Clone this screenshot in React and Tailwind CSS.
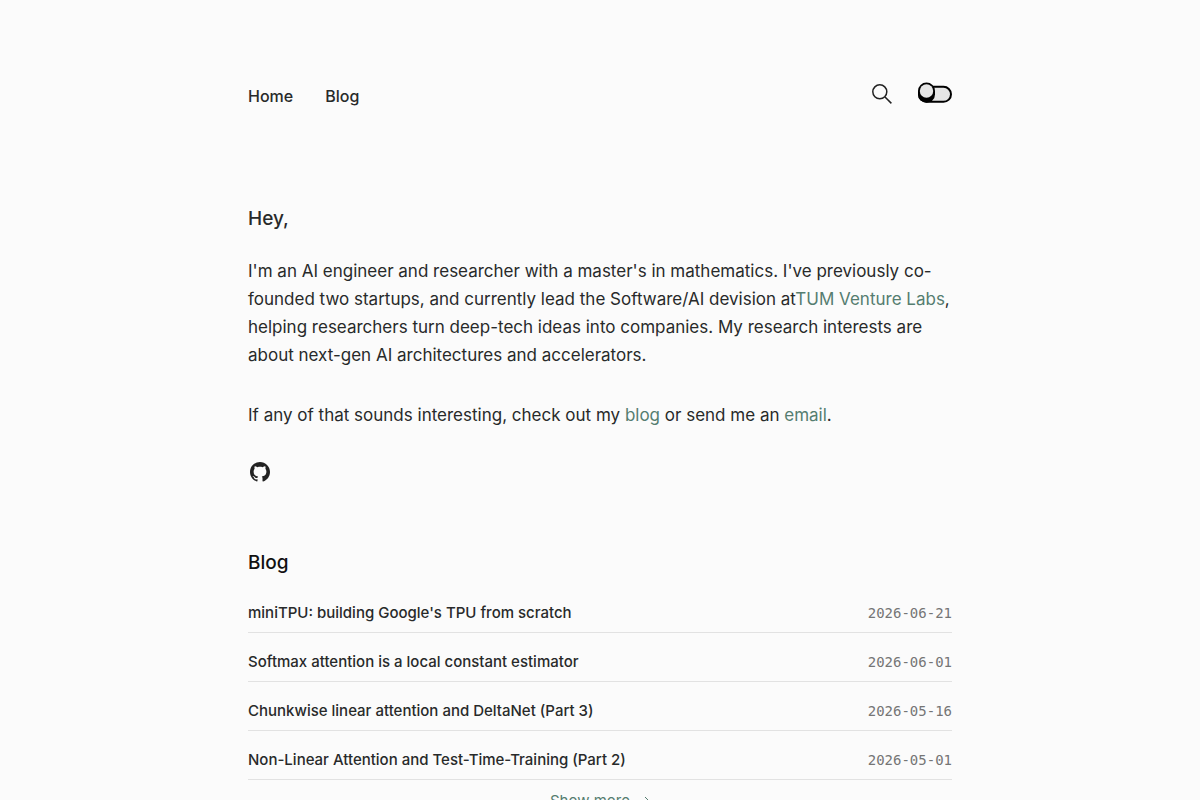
import { useState } from "react";

const POSTS = [
  { title: "miniTPU: building Google's TPU from scratch", date: "2026-06-21" },
  { title: "Softmax attention is a local constant estimator", date: "2026-06-01" },
  { title: "Chunkwise linear attention and DeltaNet (Part 3)", date: "2026-05-16" },
  { title: "Non-Linear Attention and Test-Time-Training (Part 2)", date: "2026-05-01" },
];

export default function App() {
  return (
    <div className="min-h-screen bg-[#fbfbfb] pb-20 font-['Inter',sans-serif] text-[#282a2a]">
      <div className="mx-auto max-w-3xl px-8">
        <Header />
        <main className="pt-[97px]">
          <Intro />
          <PostList />
        </main>
      </div>
    </div>
  );
}

function Header() {
  return (
    <header className="flex items-start justify-between pt-20">
      <nav className="flex gap-8 pt-1 text-base font-medium leading-6">
        <a href="#home">Home</a>
        <a href="#blog">Blog</a>
      </nav>
      <div className="flex items-center gap-6">
        <button type="button" aria-label="Search" className="cursor-pointer">
          <SearchIcon />
        </button>
        <ThemeToggle />
      </div>
    </header>
  );
}

function ThemeToggle() {
  const [dark, setDark] = useState(false);

  return (
    <button
      type="button"
      role="switch"
      aria-checked={dark}
      aria-label="Dark mode"
      onClick={() => setDark(!dark)}
      className="cursor-pointer"
    >
      <svg width="34" height="24" viewBox="0 0 34 24" aria-hidden="true">
        <rect x="1" y="6.8" width="32" height="15" rx="7.5" fill="#e6e6e6" stroke="#000" strokeWidth="2" />
        {/* the knob stands on a thick black edge */}
        <g className={dark ? "translate-x-[17px]" : ""}>
          <path d="M0 11a8.5 8.5 0 0 1 17 0v3.3a8.5 8.5 0 0 1-17 0z" fill="#000" />
          <circle cx="8.5" cy="11" r="6.7" fill="#e6e6e6" />
        </g>
      </svg>
    </button>
  );
}

function Intro() {
  return (
    <section className="text-[17px] leading-7">
      <h1 className="mb-6 text-[19px] font-medium leading-7">Hey,</h1>
      <p className="mb-8">
        I'm an AI engineer and researcher with a master's in mathematics. I've
        previously co-founded two startups, and currently lead the Software/AI
        devision at
        <TextLink href="#tum-venture-labs">TUM Venture Labs</TextLink>, helping
        researchers turn deep-tech ideas into companies. My research interests
        are about next-gen AI architectures and accelerators.
      </p>
      <p className="mb-[31px]">
        If any of that sounds interesting, check out my{" "}
        <TextLink href="#blog">blog</TextLink> or send me an{" "}
        <TextLink href="#email">email</TextLink>.
      </p>
      <a href="#github" aria-label="GitHub" className="inline-flex">
        <GithubIcon />
      </a>
    </section>
  );
}

function PostList() {
  return (
    <section id="blog" className="pt-[57px]">
      <h2 className="mb-2 text-[19px] font-medium leading-7 text-[#111]">Blog</h2>
      <ul>
        {POSTS.map((post) => (
          <li key={post.date} className="border-b border-[#e2e2e2] first:-mt-px">
            <a href="#post" className="flex items-center justify-between gap-4 pt-[17px] pb-[7px]">
              <span className="text-[15px] font-medium leading-6">{post.title}</span>
              <time
                dateTime={post.date}
                className="shrink-0 font-['DejaVu_Sans_Mono',monospace] text-sm leading-6 text-[#757575]"
              >
                {post.date}
              </time>
            </a>
          </li>
        ))}
      </ul>
      <div className="pt-2 text-center">
        <a href="#blog" className="inline-flex items-center gap-2 text-[15px] leading-6 text-[#557d70]">
          Show more
          <svg width="12" height="12" viewBox="0 0 12 12" fill="none" stroke="currentColor" aria-hidden="true">
            <path d="M1 6h10M7 2l4 4-4 4" />
          </svg>
        </a>
      </div>
    </section>
  );
}

function TextLink({ href, children }) {
  return (
    <a href={href} className="text-[#557d70]">
      {children}
    </a>
  );
}

function SearchIcon() {
  return (
    <svg width="24" height="24" viewBox="0 0 24 24" fill="none" stroke="#222" strokeWidth="1.5" aria-hidden="true">
      <circle cx="9.8" cy="11.8" r="7" />
      <path d="M15 17l6.4 6.4" />
    </svg>
  );
}

function GithubIcon() {
  return (
    <svg width="24" height="24" viewBox="0 0 24 24" fill="#222" aria-hidden="true">
      <path d="M12 2C6.48 2 2 6.48 2 12c0 4.42 2.87 8.17 6.84 9.5.5.08.66-.23.66-.5v-1.69c-2.77.6-3.36-1.34-3.36-1.34-.46-1.16-1.11-1.47-1.11-1.47-.91-.62.07-.6.07-.6 1 .07 1.53 1.03 1.53 1.03.87 1.52 2.34 1.07 2.91.83.09-.65.35-1.09.63-1.34-2.22-.25-4.55-1.11-4.55-4.92 0-1.11.38-2 1.03-2.71-.1-.25-.45-1.29.1-2.64 0 0 .84-.27 2.75 1.02.79-.22 1.65-.33 2.5-.33s1.71.11 2.5.33c1.91-1.29 2.75-1.02 2.75-1.02.55 1.35.2 2.39.1 2.64.65.71 1.03 1.6 1.03 2.71 0 3.82-2.34 4.66-4.57 4.91.36.31.69.92.69 1.85V21c0 .27.16.59.67.5C19.14 20.16 22 16.42 22 12c0-5.52-4.48-10-10-10z" />
    </svg>
  );
}
